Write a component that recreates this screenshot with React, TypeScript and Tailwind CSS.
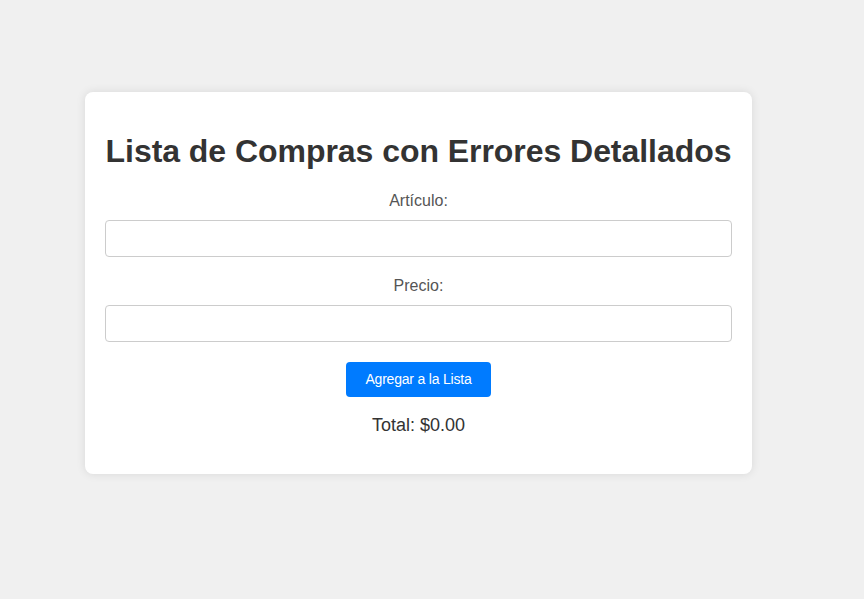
export default function App() {
  return (
    <div className="min-h-[599px] w-full bg-[#f0f0f0] pt-[92px]" style={{ fontFamily: '"Liberation Sans", Arial, sans-serif' }}>
      <div className="ml-[85px] w-[667px] rounded-[8px] bg-white p-[20px] text-center shadow-[0_0_10px_rgba(0,0,0,0.1)]">
        <h1 className="-mx-[10px] my-[21.44px] whitespace-nowrap text-[32px] font-bold leading-[36.8px] tracking-[-0.05px] text-[#333]">Lista de Compras con Errores Detallados</h1>
        <label className="mb-[10px] block text-[16px] leading-[18.4px] text-[#555]">Artículo:</label>
        <input type="text" className="mb-[20px] block h-[37px] w-full rounded-[4px] border border-[#ccc] px-[10px] text-[16px]" />
        <label className="mb-[10px] block text-[16px] leading-[18.4px] text-[#555]">Precio:</label>
        <input type="number" className="mb-[20px] block h-[37px] w-full rounded-[4px] border border-[#ccc] px-[10px] text-[16px]" />
        <button className="h-[35px] w-[145px] rounded-[4px] bg-[#007bff] px-0 text-[14px] tracking-[-0.2px] text-white">Agregar a la Lista</button>
        <div className="my-[18px] text-[18px] leading-[21px] text-[#333]">Total: $0.00</div>
      </div>
    </div>
  );
}
